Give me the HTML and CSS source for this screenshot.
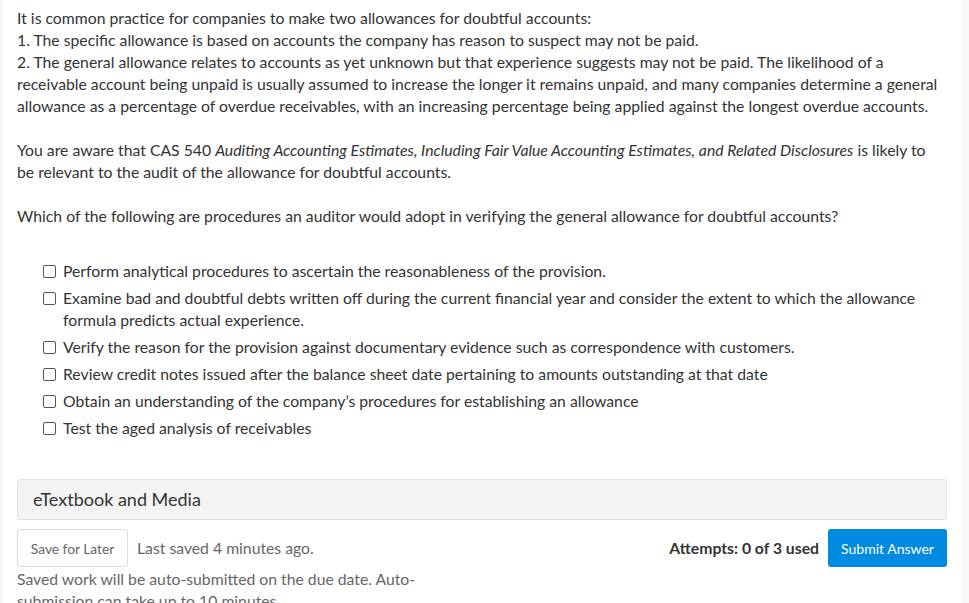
FILE: index.html
```html
<!DOCTYPE html>
<html lang="en">
<head>
<meta charset="utf-8">
<title>Question</title>
<link rel="stylesheet" href="styles.css">
</head>
<body>
<div class="page">
  <div class="edge-left"></div>
  <main class="content">
    <div class="question">
      <p>It is common practice for companies to make two allowances for doubtful accounts:<br>
      1. The specific allowance is based on accounts the company has reason to suspect may not be paid.<br>
      2. The general allowance relates to accounts as yet unknown but that experience suggests may not be paid. The likelihood of a receivable account being unpaid is usually assumed to increase the longer it remains unpaid, and many companies determine a general allowance as a percentage of overdue receivables, with an increasing percentage being applied against the longest overdue accounts.</p>
      <p>You are aware that CAS 540 <em>Auditing Accounting Estimates, Including Fair Value Accounting Estimates, and Related Disclosures</em> is likely to be relevant to the audit of the allowance for doubtful accounts.</p>
      <p>Which of the following are procedures an auditor would adopt in verifying the general allowance for doubtful accounts?</p>
    </div>
    <ul class="options">
      <li><span class="box"></span><span class="label">Perform analytical procedures to ascertain the reasonableness of the provision.</span></li>
      <li><span class="box"></span><span class="label">Examine bad and doubtful debts written off during the current financial year and consider the extent to which the allowance formula predicts actual experience.</span></li>
      <li><span class="box"></span><span class="label">Verify the reason for the provision against documentary evidence such as correspondence with customers.</span></li>
      <li><span class="box"></span><span class="label">Review credit notes issued after the balance sheet date pertaining to amounts outstanding at that date</span></li>
      <li><span class="box"></span><span class="label">Obtain an understanding of the company’s procedures for establishing an allowance</span></li>
      <li><span class="box"></span><span class="label">Test the aged analysis of receivables</span></li>
    </ul>
    <div class="media-panel">eTextbook and Media</div>
    <div class="actions">
      <div class="save-area">
        <div class="save-row">
          <button class="btn-save">Save for Later</button>
          <span class="saved">Last saved 4 minutes ago.</span>
        </div>
        <p class="auto-note">Saved work will be auto-submitted on the due date. Auto-submission can take up to 10 minutes.</p>
      </div>
      <div class="submit-area">
        <span class="attempts">Attempts: 0 of 3 used</span>
        <button class="btn-submit">Submit Answer</button>
      </div>
    </div>
  </main>
  <div class="edge-right"></div>
</div>
</body>
</html>
```
FILE: styles.css
```css
html, body {
  margin: 0;
  padding: 0;
  background: #fff;
  height: 100%;
  overflow: hidden;
}
body {
  font-family: Lato, "Open Sans", Arial, sans-serif;
  font-size: 15.75px;
  line-height: 22px;
  color: #333;
}
.page {
  display: flex;
  height: 603px;
}
.edge-left {
  width: 3px;
  background: #f7f7f7;
  flex: none;
}
.edge-right {
  width: 7px;
  background: #f8f8f8;
  flex: none;
}
.content {
  flex: 1;
  padding: 7px 15px 0 14px;
  min-width: 0;
}
.question {
  padding-right: 5px;
}
.question p {
  margin: 0 0 22px 0;
}
.question p:last-child {
  margin-bottom: 0;
}
.options {
  list-style: none;
  margin: 33px 0 0 0;
  padding: 0 0 0 26px;
  display: flex;
  flex-direction: column;
  gap: 5px;
}
.options li {
  display: flex;
  align-items: flex-start;
}
.box {
  flex: none;
  width: 11px;
  height: 11px;
  border: 1px solid #555;
  border-radius: 2px;
  margin: 5px 7px 0 0;
}
.label {
  flex: 1;
}
.media-panel {
  margin-top: 40px;
  height: 41px;
  box-sizing: border-box;
  border: 1px solid #e2e2e2;
  border-radius: 3px;
  background: #f4f4f4;
  font-size: 18px;
  line-height: 39px;
  padding-left: 15px;
  color: #333;
}
.actions {
  margin-top: 9px;
  display: flex;
  justify-content: space-between;
  align-items: flex-start;
}
.save-area {
  width: 420px;
}
.save-row {
  display: flex;
  align-items: center;
  gap: 9px;
}
.btn-save {
  font-family: inherit;
  font-size: 13.75px;
  color: #666;
  background: #fff;
  border: 1px solid #ddd;
  border-radius: 3px;
  height: 38px;
  padding: 0;
  width: 111px;
}
.saved {
  color: #666;
}
.auto-note {
  margin: 1px 0 0 0;
  color: #666;
}
.submit-area {
  display: flex;
  align-items: center;
  gap: 9px;
}
.attempts {
  font-weight: 700;
  color: #333;
}
.btn-submit {
  font-family: inherit;
  font-size: 14px;
  color: #fff;
  background: #008ae0;
  border: none;
  border-radius: 3px;
  height: 38px;
  width: 119px;
}
```
